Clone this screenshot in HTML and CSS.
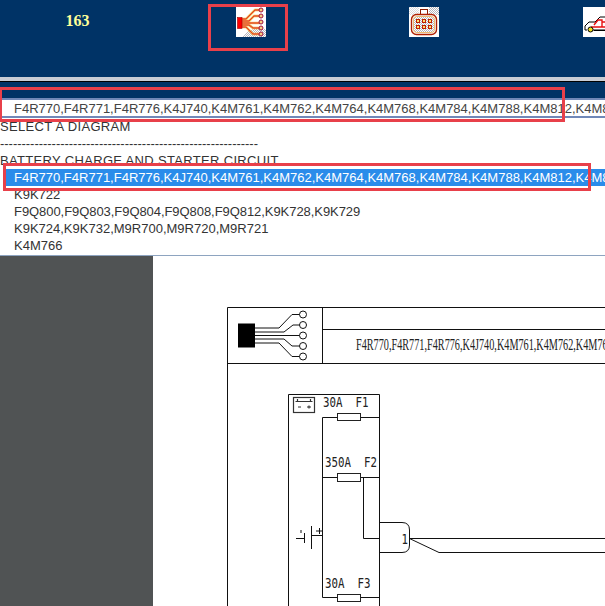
FILE: index.html
```html
<!DOCTYPE html>
<html lang="en">
<head>
<meta charset="utf-8">
<title>Wiring diagrams</title>
<link rel="stylesheet" href="styles.css">
</head>
<body>
<header class="topbar">
  <div class="count">163</div>
  <div class="tool tool-wiring">
    <svg class="icon" viewBox="0 0 30 30" width="30" height="30">
      <defs>
        <pattern id="dither" width="2" height="2" patternUnits="userSpaceOnUse"><rect width="1" height="1" fill="#b4b4bc"/><rect x="1" y="1" width="1" height="1" fill="#b4b4bc"/></pattern>
      </defs>
      <rect width="30" height="30" fill="#fff"/>
      <polygon points="6,30 30,30 30,22 18,22 12,24" fill="url(#dither)"/>
      <g class="wire-o">
        <path d="M6 12 H10 L19 3 H24"/><path d="M6 14 H13 L18 9 H24"/><path d="M6 16 H24"/><path d="M6 18 H13 L17 21 H24"/><path d="M6 20 H10 L17 27 H24"/>
      </g>
      <g class="wire-r">
        <path d="M6 12 H10 L19 3 H24"/><path d="M6 14 H13 L18 9 H24"/><path d="M6 16 H24"/><path d="M6 18 H13 L17 21 H24"/><path d="M6 20 H10 L17 27 H24"/>
      </g>
      <rect x="1.5" y="10.5" width="4.5" height="11" fill="#f00" stroke="#a00000" stroke-width=".6"/>
      <g class="pin-dot">
        <circle cx="25" cy="3" r="2"/><circle cx="25" cy="9" r="2"/><circle cx="25" cy="15" r="2"/><circle cx="25" cy="21" r="2"/><circle cx="25" cy="27" r="2"/>
      </g>
    </svg>
    <span class="tool-mark"></span>
  </div>
  <div class="tool tool-connector">
    <svg class="icon" viewBox="0 0 30 30" width="30" height="30">
      <rect width="30" height="30" fill="#fff"/>
      <rect x="20" y="0" width="10" height="8" fill="url(#dither)"/>
      <rect x="0" y="0" width="10" height="8" fill="url(#dither)" opacity=".5"/>
      <rect x="11.5" y="2.5" width="7" height="5" fill="#fff" stroke="#8a1a00"/>
      <rect x="2.5" y="7.5" width="25" height="20" rx="5" fill="#fff" stroke="#b02000" stroke-width="1.4"/>
      <rect x="4.5" y="9.5" width="21" height="16" rx="3" fill="url(#dither)" stroke="#f0b050" stroke-width=".8"/>
      <g class="socket">
        <rect x="7.5" y="12.5" width="3" height="3"/><rect x="13.5" y="12.5" width="3" height="3"/><rect x="19.5" y="12.5" width="3" height="3"/>
        <rect x="7.5" y="18.5" width="3" height="3"/><rect x="13.5" y="18.5" width="3" height="3"/><rect x="19.5" y="18.5" width="3" height="3"/>
      </g>
    </svg>
  </div>
  <div class="tool tool-car">
    <svg class="icon" viewBox="0 0 30 30" width="30" height="30">
      <rect width="30" height="30" fill="#fff"/>
      <path class="car" d="M2 19 L6 15 H12 L17 10 H30 V23 H10 M4 23 H2 V19"/>
      <path class="car-wire" d="M11 18 L15 13 H19 V20 M19 15 H25 V12 V20 M8 20 H30"/>
      <path class="car-base" d="M11 23.5 H30"/>
      <circle class="car-wheel" cx="7.5" cy="22.5" r="2.5"/>
    </svg>
  </div>
</header>
<div class="rule"></div>
<div class="current">
  <div class="band"></div>
  <div class="current-row">F4R770,F4R771,F4R776,K4J740,K4M761,K4M762,K4M764,K4M768,K4M784,K4M788,K4M812,K4M813</div>
  <span class="mark mark-current"></span>
</div>
<nav class="list">
  <div class="item caps">SELECT A DIAGRAM</div>
  <div class="item dashes">------------------------------------------------------------</div>
  <div class="item caps">BATTERY CHARGE AND STARTER CIRCUIT</div>
  <div class="item sub selected">F4R770,F4R771,F4R776,K4J740,K4M761,K4M762,K4M764,K4M768,K4M784,K4M788,K4M812,K4M813</div>
  <div class="item sub">K9K722</div>
  <div class="item sub tight">F9Q800,F9Q803,F9Q804,F9Q808,F9Q812,K9K728,K9K729</div>
  <div class="item sub">K9K724,K9K732,M9R700,M9R720,M9R721</div>
  <div class="item sub">K4M766</div>
  <span class="mark mark-selected"></span>
</nav>
<main class="viewer">
  <aside class="gutter"></aside>
  <section class="sheet">
    <svg class="drawing" viewBox="153 256 452 350" width="452" height="350">
      <g class="ln">
        <path d="M227.5 606 V307.5 H605"/>
        <path d="M227.5 363.5 H605"/>
        <path d="M322.5 307.5 V363.5"/>
        <path d="M322.5 329.5 H605"/>
        <path d="M288.5 606 V394.5 H379.5 V606"/>
      </g>
      <rect x="238" y="323.5" width="17" height="24" fill="#000"/>
      <g class="ln">
        <path d="M255 328 H279 L292 314.5 H299.5"/>
        <path d="M255 332 H284 L293 325 H299.5"/>
        <path d="M255 335.5 H299.5"/>
        <path d="M255 339 H284 L292 346 H299.5"/>
        <path d="M255 343 H279 L292 356.5 H299.5"/>
        <circle cx="303" cy="314.5" r="3.5"/><circle cx="303" cy="325" r="3.5"/><circle cx="303" cy="335.5" r="3.5"/><circle cx="303" cy="346" r="3.5"/><circle cx="303" cy="356.5" r="3.5"/>
      </g>
      <text class="title" transform="translate(356 350) scale(.62 1)">F4R770,F4R771,F4R776,K4J740,K4M761,K4M762,K4M764,K4M768,K4M784,K4M788,K4M812</text>

      <g class="ln">
        <path d="M379.5 417.5 H322.5 V597.5 H379.5"/>
        <path d="M322.5 477.5 H379.5"/>
        <path d="M363.5 477.5 V538.5 H379.5"/>
        <path d="M379.5 522.5 H402 Q409.5 522.5 409.5 530 V545 Q409.5 552.5 402 552.5 H379.5"/>
        <path d="M409.5 538.5 H605"/>
        <path d="M409.5 538.5 L439 552.5 H605"/>
        <path d="M296 538.5 H304.5 M304.5 533 V543 M311.5 526 V549 M311.5 535.5 H322.5 M316 531 H323 M319.5 528 V534 M301 530 V533"/>
      </g>
      <g class="batt">
        <rect x="293.5" y="397.5" width="21" height="15"/>
        <path d="M295.5 401.5 H312.5 M297.5 401.5 V399 M310.5 401.5 V399 M298 407 H301 M307 407 H311 M309 405.5 V408.5"/>
      </g>
      <g class="fuse">
        <rect x="337.5" y="413.5" width="23" height="7"/>
        <rect x="337.5" y="473.5" width="23" height="8"/>
        <rect x="337.5" y="594.5" width="23" height="7"/>
      </g>
      <text class="label" transform="translate(323 407) scale(.77 1)">30A  F1</text>
      <text class="label" transform="translate(325 467) scale(.77 1)">350A  F2</text>
      <text class="label" transform="translate(325 588) scale(.77 1)">30A  F3</text>
      <text class="label" transform="translate(401.5 543.5) scale(.77 1)">1</text>
    </svg>
  </section>
</main>
</body>
</html>
```
FILE: styles.css
```css
* { box-sizing: border-box; }
html, body { margin: 0; padding: 0; height: 606px; overflow: hidden; background: #fff; }
body { font-family: "Liberation Sans", Arial, sans-serif; font-size: 13px; color: #333; position: relative; }

.topbar { height: 77px; background: #003366; display: flex; align-items: flex-start; }
.count { width: 155px; padding-top: 12px; text-align: center; font: bold 16px/18px "Liberation Serif", serif; color: #ffff99; }
.tool { position: relative; margin-top: 7px; height: 30px; }
.tool-wiring { margin-left: 81px; width: 30px; }
.tool-connector { margin-left: 143px; width: 30px; }
.tool-car { margin-left: 144px; width: 22px; overflow: hidden; }
.icon { display: block; }
.tool-mark { position: absolute; left: -28px; top: -3px; width: 80px; height: 47px; border: 3px solid #e8404a; }

.wire-o path { fill: none; stroke: #f0b040; stroke-width: 2.4; }
.wire-r path { fill: none; stroke: #e01030; stroke-width: .8; }
.pin-dot circle { fill: #f8d080; stroke: #a01040; stroke-width: 1; }
.socket rect { fill: #ffe070; stroke: #c02000; stroke-width: 1; }
.car { fill: #fff; stroke: #000; stroke-width: 1; }
.car-wire { fill: none; stroke: #e81010; stroke-width: 1.4; }
.car-base { fill: none; stroke: #000; stroke-width: 1; }
.car-wheel { fill: #f0e020; stroke: #000; stroke-width: 1; }

.rule { height: 5px; background: #c8ccd4; border-bottom: 1px solid #000; }

.current { position: relative; z-index: 2; background: #fff; height: 36px; }
.band { height: 16px; background: #003366; }
.current-row { height: 20px; padding: 1px 0 0 14px; line-height: 16px; white-space: nowrap; overflow: hidden; border-top: 2px solid #7088b8; border-bottom: 2px solid #7088b8; background: #fff; color: #444; }
.mark { position: absolute; border: 3px solid #e8404a; pointer-events: none; }
.mark-current { left: 0; top: 5px; width: 565px; height: 35px; border-left-width: 2px; }

.list { position: relative; height: 137px; background: #fff; }
.item { height: 17px; line-height: 17px; white-space: nowrap; overflow: hidden; color: #333; }
.caps { letter-spacing: .33px; }
.dashes { letter-spacing: -.03px; }
.tight { letter-spacing: -.06px; }
.sub { padding-left: 14px; }
.sub.selected { background: #2a8cea; color: #fff; margin-left: 3px; padding-left: 11px; }
.mark-selected { left: 3px; top: 45px; width: 588px; height: 28px; }

.viewer { display: flex; height: 351px; border-top: 1px solid #8ea4c0; }
.gutter { width: 153px; background: #505354; }
.sheet { flex: 1; background: #fff; overflow: hidden; }
.drawing { display: block; }

.ln, .ln * { fill: none; stroke: #111; stroke-width: 1; }
.batt * { fill: none; stroke: #333; stroke-width: 1.2; }
.fuse rect { fill: #fff; stroke: #222; stroke-width: 1; }
.title { font: 16.5px "Liberation Serif", serif; fill: #222; }
.label { font: 14px "DejaVu Sans Mono", monospace; fill: #222; white-space: pre; }
```
